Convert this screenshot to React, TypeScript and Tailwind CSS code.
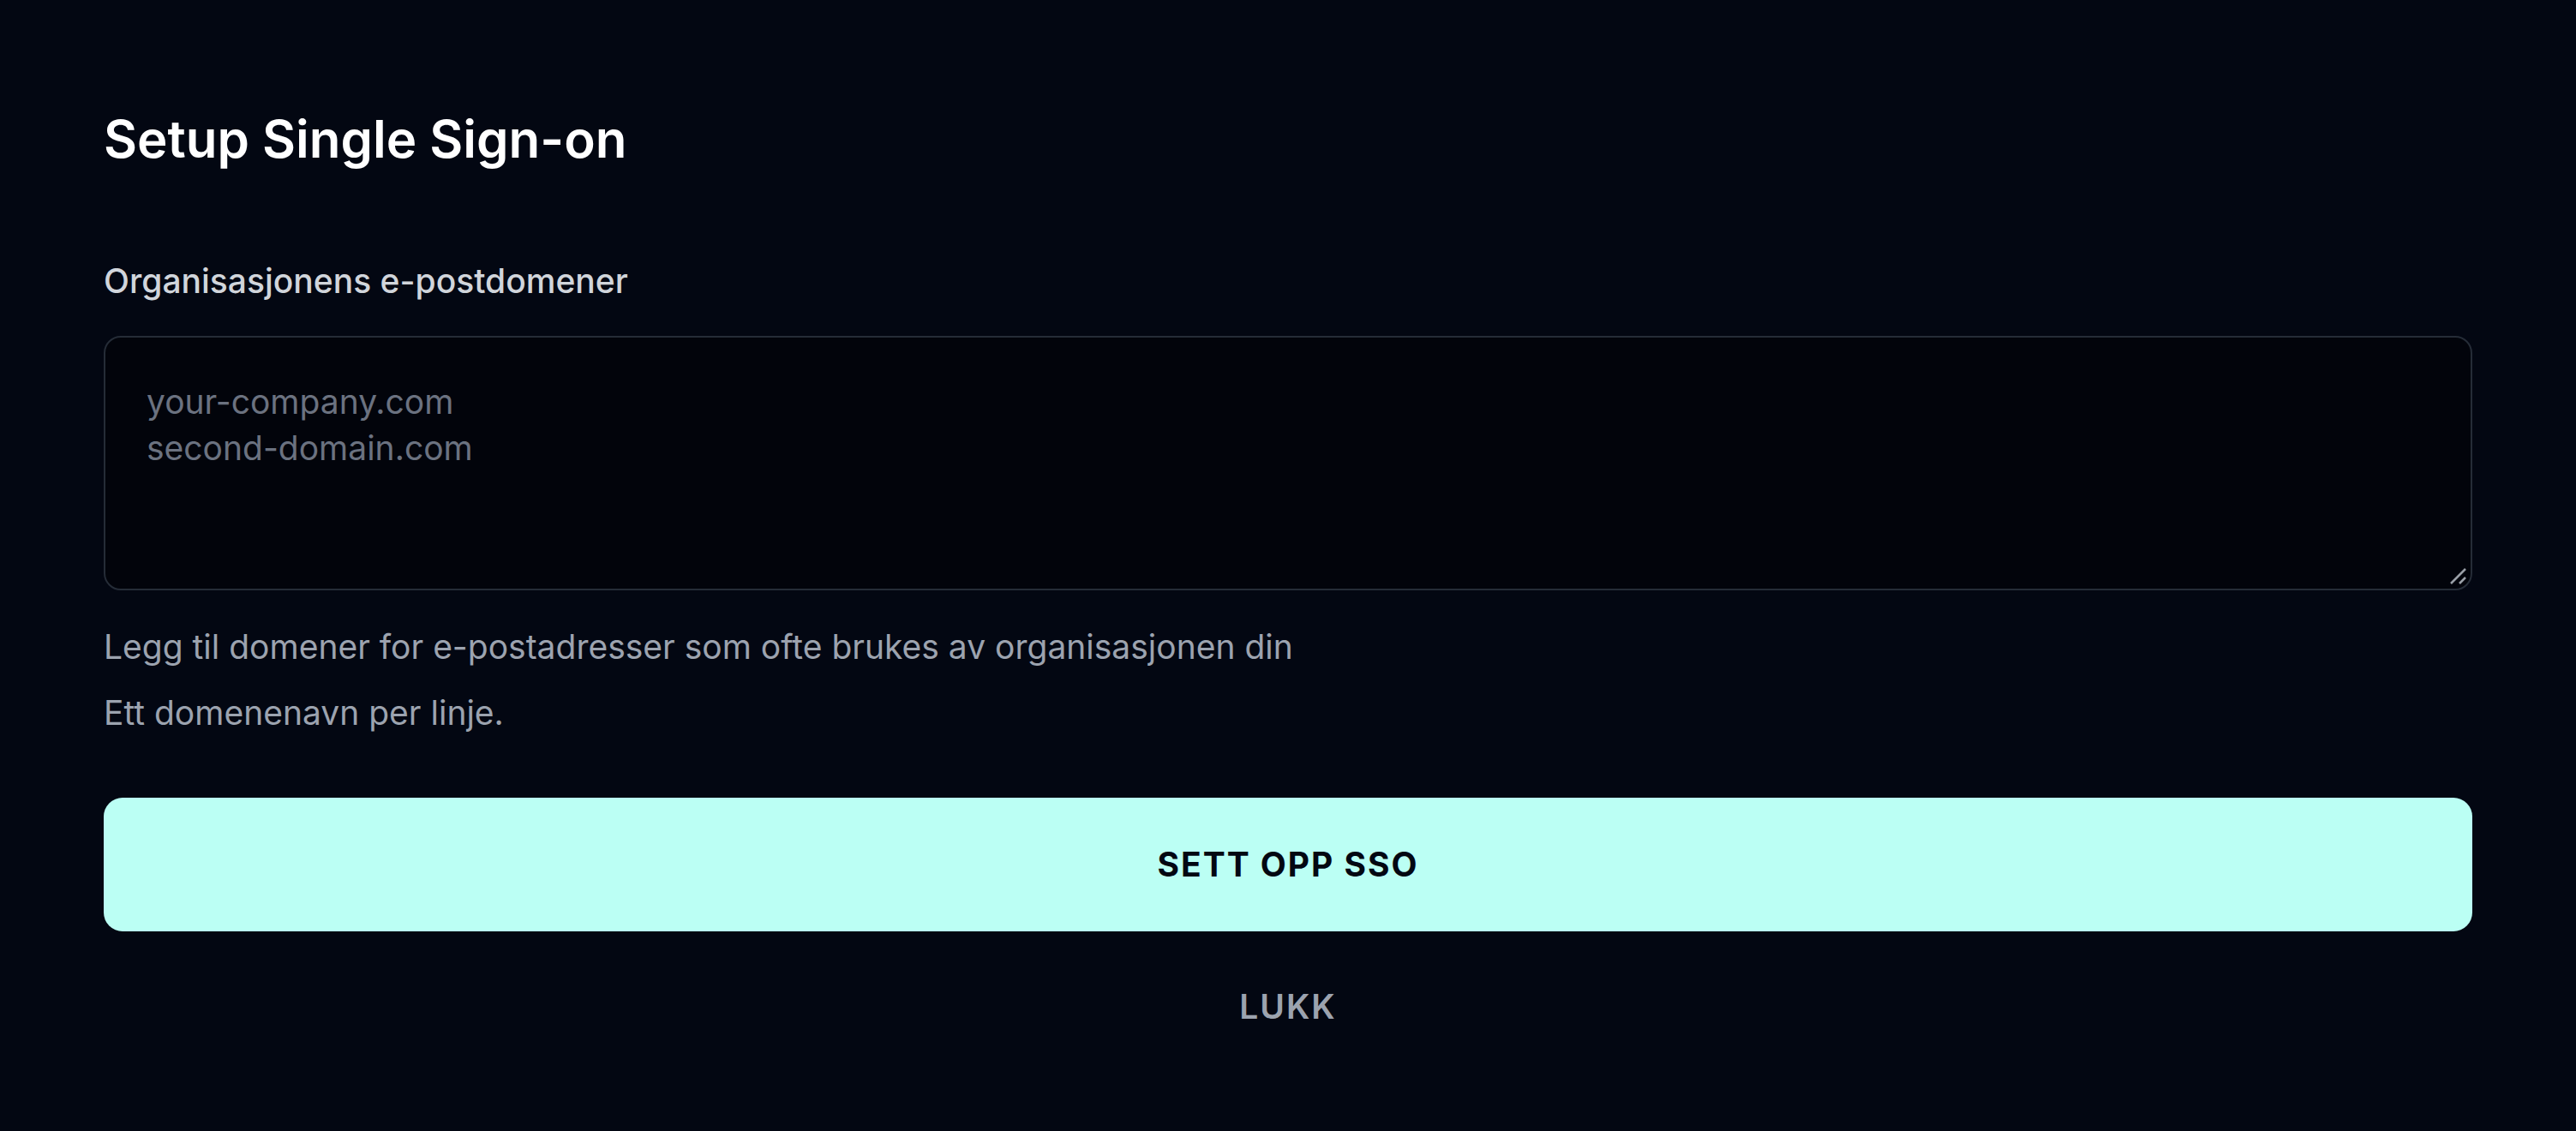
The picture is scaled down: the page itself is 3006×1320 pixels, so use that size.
import React from "react";

export default function App() {
  return (
    <main className="min-h-screen w-full bg-[#030712] px-[121px] pt-[127px] pb-[120px] font-['Inter','Noto_Sans',sans-serif] [color-scheme:dark]">
      {/* Header */}
      <h1 className="text-[60px] leading-[70px] font-semibold text-white">
        Setup Single Sign-on
      </h1>

      {/* Domains field */}
      <label
        htmlFor="domains"
        className="block mt-[104px] text-[39px] leading-[54px] font-medium text-[#d1d5db]"
      >
        Organisasjonens e-postdomener
      </label>
      <div className="relative mt-[37px]">
        <textarea
          id="domains"
          placeholder={"your-company.com\nsecond-domain.com"}
          className="block w-full h-[297px] resize-none rounded-[20px] border-2 border-[#252c37] bg-[#02040b] px-[48px] pt-[48px] text-[39px] leading-[54px] text-[#e5e7eb] placeholder:text-[#6b7280] outline-none"
        />
        {/* resize grip */}
        <svg
          className="absolute right-[6px] bottom-[6px] w-[22px] h-[22px] pointer-events-none"
          viewBox="0 0 22 22"
        >
          <line x1="3" y1="20" x2="20" y2="3" stroke="#9aa0a8" strokeWidth="2.5" />
          <line x1="13" y1="20" x2="20" y2="13" stroke="#9aa0a8" strokeWidth="2.5" />
        </svg>
      </div>
      <p className="mt-[39px] text-[39px] leading-[54px] text-[#9ca3af]">
        Legg til domener for e-postadresser som ofte brukes av organisasjonen din
      </p>
      <p className="mt-[23px] text-[39px] leading-[54px] text-[#9ca3af]">
        Ett domenenavn per linje.
      </p>

      {/* Actions */}
      <div className="mt-[72px] flex flex-col items-center">
        <button className="w-full h-[156px] rounded-[22px] bg-[#bbfff4] text-[39px] font-bold tracking-wider text-[#030712]">
          SETT OPP SSO
        </button>
        <button className="mt-[61px] text-[39px] leading-[54px] font-semibold tracking-wider text-[#9ca3af]">
          LUKK
        </button>
      </div>
    </main>
  );
}
